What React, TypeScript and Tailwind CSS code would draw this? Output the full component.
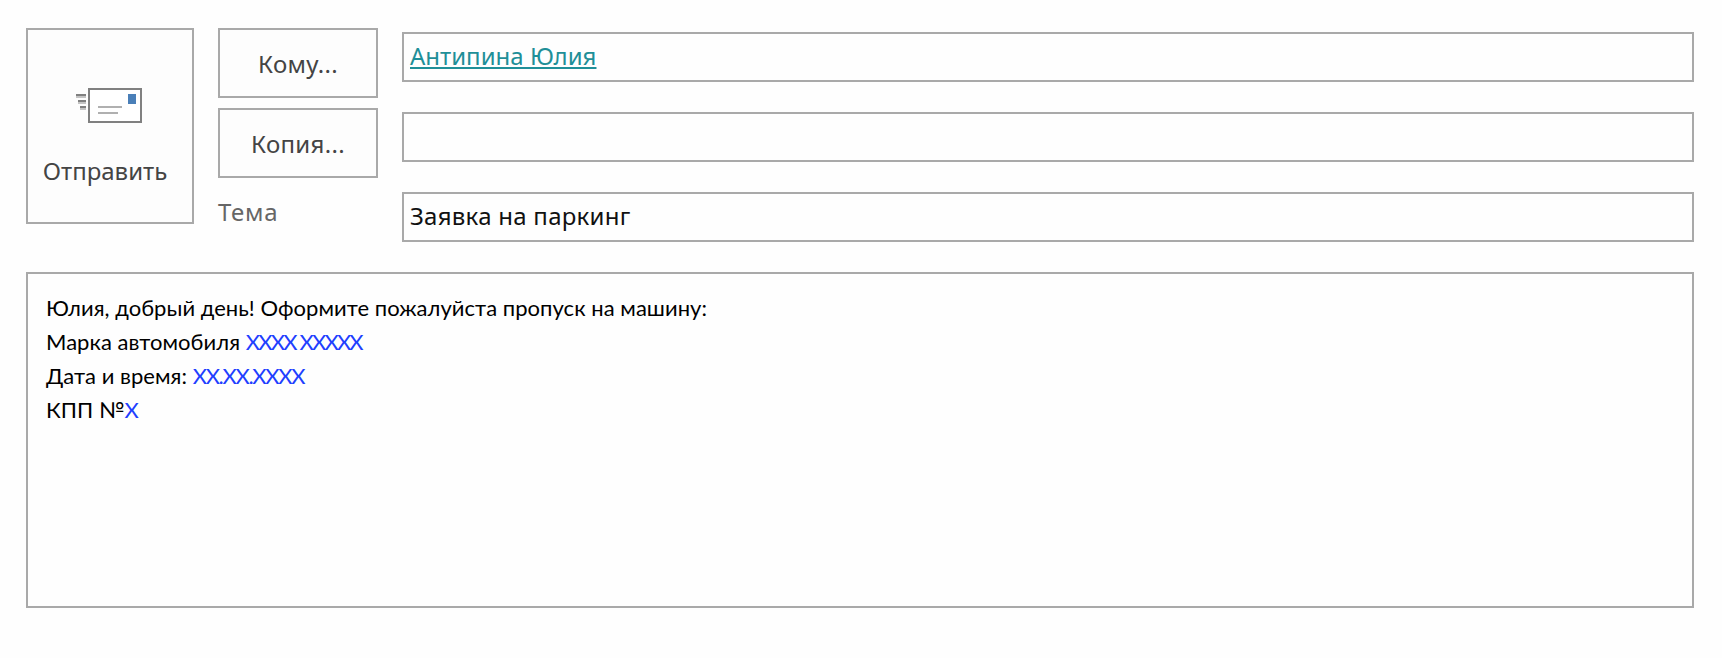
export default function App() {
  return (
    <div className="w-[1722px] h-[658px] bg-[#fefefe] pt-[28px] pl-[26px] font-['Noto_Sans',sans-serif] overflow-hidden">
      <div className="flex h-[214px]">
        <button className="w-[168px] h-[196px] border-2 border-[#a9a9a9] bg-[#fdfdfd] flex flex-col items-center pr-[10px] pt-[58px] text-[24px] leading-[32px] text-[#444444]">
          <svg width="66" height="35" viewBox="0 0 66 35" className="ml-[8px] shrink-0">
            <rect x="13" y="1" width="52" height="33" fill="#ffffff" stroke="#808080" strokeWidth="2" />
            <rect x="52" y="6" width="8" height="10" fill="#4a7fb8" />
            <rect x="22" y="18" width="24" height="2" fill="#b0b0b0" />
            <rect x="22" y="24" width="20" height="2" fill="#b0b0b0" />
            <rect x="0" y="6" width="10" height="2" fill="#808080" />
            <rect x="0" y="8" width="10" height="2" fill="#c4c4c4" />
            <rect x="2" y="12" width="8" height="2" fill="#808080" />
            <rect x="2" y="14" width="8" height="2" fill="#c4c4c4" />
            <rect x="4" y="18" width="6" height="2" fill="#808080" />
            <rect x="4" y="20" width="6" height="2" fill="#c4c4c4" />
          </svg>
          <span className="mt-[32px]">Отправить</span>
        </button>

        <div className="w-[160px] ml-[24px] flex flex-col gap-[10px]">
          <button className="h-[70px] border-2 border-[#a9a9a9] bg-[#fdfdfd] pt-[2px] text-[24px] tracking-[0.3px] text-[#444444]">Кому...</button>
          <button className="h-[70px] border-2 border-[#a9a9a9] bg-[#fdfdfd] pt-[2px] text-[24px] tracking-[0.3px] text-[#444444]">Копия...</button>
          <div className="text-[24px] leading-[32px] tracking-[0.7px] text-[#666666] mt-[8px]">Тема</div>
        </div>

        <div className="w-[1292px] ml-[24px] pt-[4px] flex flex-col gap-[30px]">
          <div className="h-[50px] border-2 border-[#a9a9a9] px-[6px] pb-[2px] flex items-center text-[24px]">
            <a className="text-[#1f8f98] underline">Антипина Юлия</a>
          </div>
          <div className="h-[50px] border-2 border-[#a9a9a9]" />
          <div className="h-[50px] border-2 border-[#a9a9a9] px-[6px] pb-[2px] flex items-center text-[24px] tracking-[0.26px] text-[#111111]">
            Заявка на паркинг
          </div>
        </div>
      </div>

      <div className="w-[1668px] h-[336px] mt-[30px] border-2 border-[#a9a9a9] pl-[18px] pt-[17px] font-['Lato',sans-serif] text-[22px] leading-[34px] tracking-[0.04px] text-black">
        <div>Юлия, добрый день! Оформите пожалуйста пропуск на машину:</div>
        <div>Марка автомобиля <span className="text-[#1f3fff] tracking-[-1.8px]">XXXX XXXXX</span></div>
        <div>Дата и время: <span className="text-[#1f3fff] tracking-[-1.3px]">XX.XX.XXXX</span></div>
        <div>КПП №<span className="text-[#1f3fff] tracking-[-1.8px]">X</span></div>
      </div>
    </div>
  );
}
